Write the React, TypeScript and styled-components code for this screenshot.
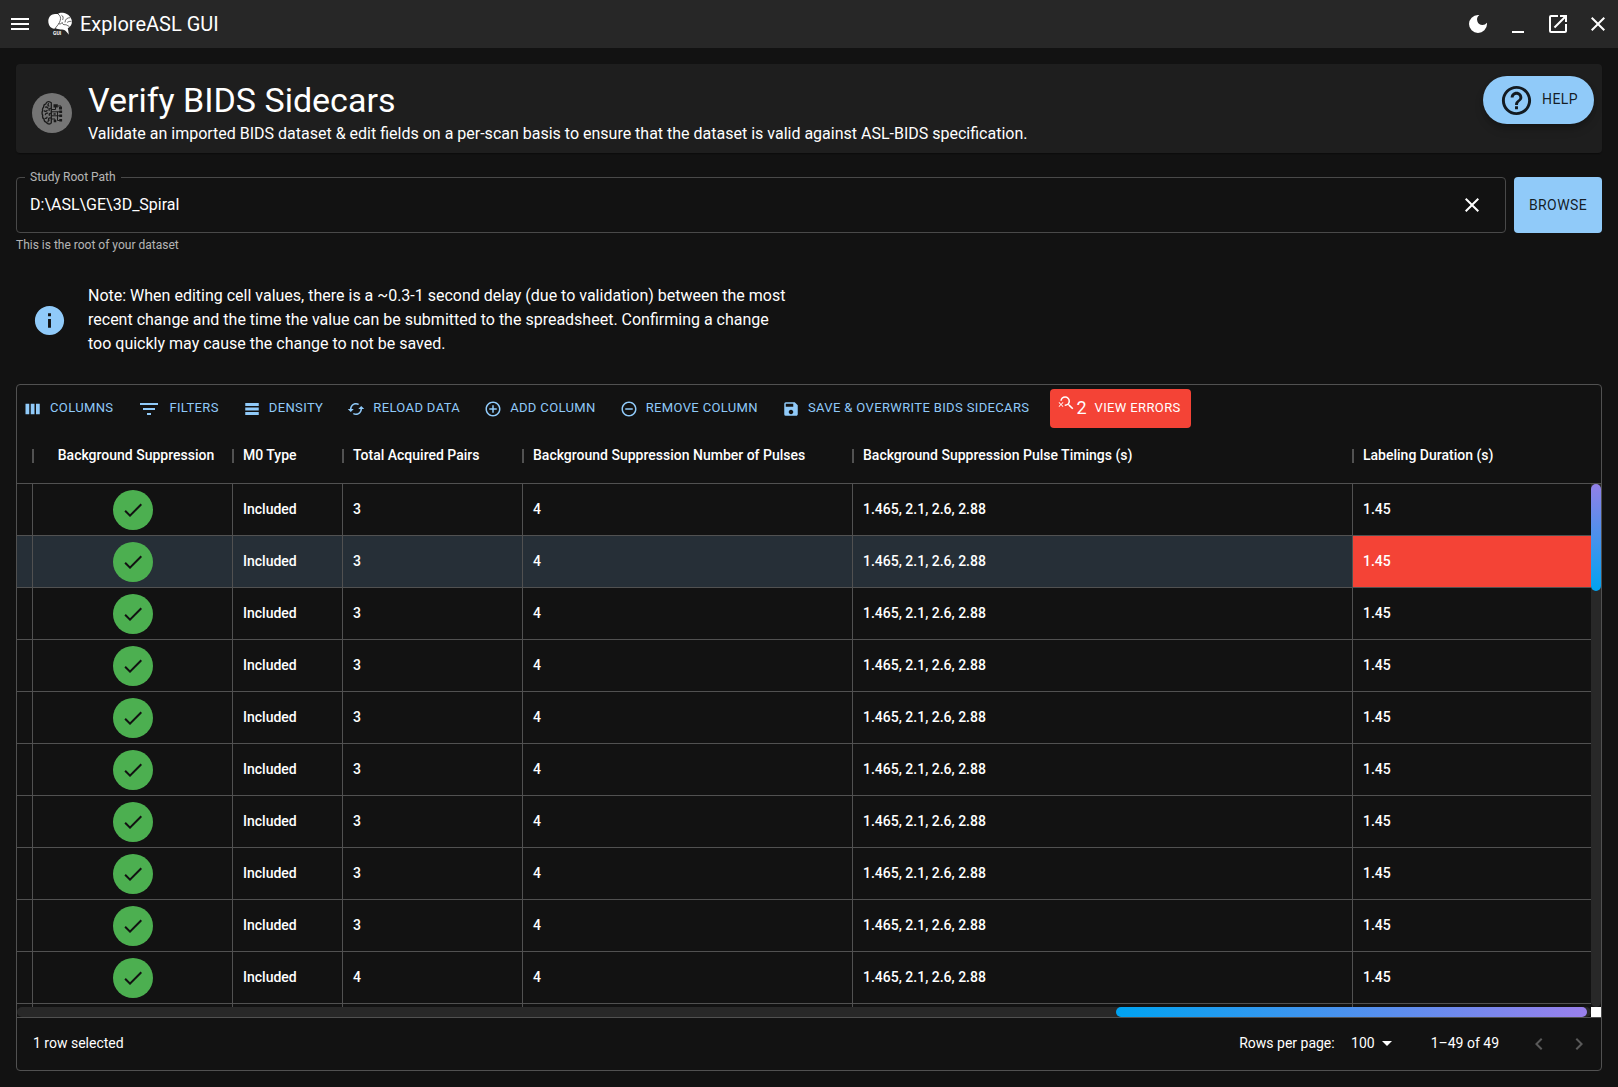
import React, { useState } from "react";
import styled, { createGlobalStyle, css } from "styled-components";
import {
  MdMenu,
  MdDarkMode,
  MdMinimize,
  MdOpenInNew,
  MdClose,
  MdHelpOutline,
  MdInfo,
  MdFilterList,
  MdCached,
  MdAddCircleOutline,
  MdRemoveCircleOutline,
  MdSave,
  MdSearchOff,
  MdCheck,
  MdArrowDropDown,
  MdKeyboardArrowLeft,
  MdKeyboardArrowRight,
} from "react-icons/md";

const color = {
  page: "#121212",
  paper: "#1e1e1e",
  bar: "#272727",
  line: "#515151",
  primary: "#90caf9",
  error: "#f44336",
  success: "#4caf50",
  selected: "#262f37",
  muted: "rgba(255, 255, 255, 0.7)",
  disabled: "rgba(255, 255, 255, 0.3)",
  ink: "rgba(0, 0, 0, 0.87)",
};

const GlobalStyle = createGlobalStyle`
  *, *::before, *::after { box-sizing: border-box; }
  body {
    margin: 0;
    background: ${color.page};
    color: #fff;
    font-family: Roboto, "Liberation Sans", sans-serif;
    font-size: 16px;
    line-height: 24px;
  }
  button, input, select { font: inherit; color: inherit; }
  svg { display: block; flex: none; }
`;

const Shell = styled.div`
  display: flex;
  flex-direction: column;
  height: 100vh;
`;

const AppBar = styled.header`
  display: flex;
  align-items: center;
  height: 48px;
  flex: none;
  background: ${color.bar};
`;

const IconButton = styled.button`
  display: flex;
  padding: 8px;
  border: 0;
  border-radius: 50%;
  background: none;
  font-size: 24px;
  cursor: pointer;

  &:disabled {
    color: ${color.disabled};
    cursor: default;
  }
`;

const Brand = styled.div`
  display: flex;
  align-items: center;
  gap: 8px;
  flex: 1;
  padding-left: 8px;
  font-size: 20px;
`;

const Main = styled.main`
  display: flex;
  flex-direction: column;
  flex: 1;
  min-height: 0;
  padding: 16px;
`;

const TitleCard = styled.section`
  display: flex;
  align-items: center;
  gap: 16px;
  padding: 16px 8px 7px 16px;
  border-radius: 4px;
  background: ${color.paper};
  box-shadow: 0 2px 1px -1px rgba(0, 0, 0, 0.2), 0 1px 1px rgba(0, 0, 0, 0.14);
`;

const Avatar = styled.span<{ $tone: string }>`
  display: flex;
  align-items: center;
  justify-content: center;
  flex: none;
  width: 40px;
  height: 40px;
  border-radius: 50%;
  background: ${(p) => p.$tone};
  color: ${color.page};
  font-size: 24px;
`;

const TitleText = styled.div`
  flex: 1;
`;

const Title = styled.h1`
  margin: 0 0 2px;
  font-size: 34px;
  font-weight: 400;
  line-height: 40px;
`;

const Subtitle = styled.p`
  margin: 0;
`;

const buttonText = css`
  padding-bottom: 2px;
  letter-spacing: 0.028em;
  text-transform: uppercase;
`;

const HelpButton = styled.button`
  display: flex;
  align-items: center;
  align-self: flex-start;
  gap: 8px;
  height: 48px;
  margin-top: -4px;
  padding: 0 16px;
  border: 0;
  border-radius: 24px;
  background: ${color.primary};
  color: ${color.ink};
  font-size: 14px;
  box-shadow: 0 3px 5px -1px rgba(0, 0, 0, 0.2), 0 6px 10px rgba(0, 0, 0, 0.14);
  cursor: pointer;
`;

const ButtonLabel = styled.span`
  ${buttonText}
`;

const PathRow = styled.div`
  display: flex;
  gap: 8px;
  margin-top: 24px;
`;

const PathField = styled.div`
  position: relative;
  display: flex;
  align-items: center;
  flex: 1;
  height: 56px;
  padding: 0 13px;
  border: 1px solid #494949;
  border-radius: 4px;
`;

const PathLabel = styled.label`
  position: absolute;
  top: -11px;
  left: 8px;
  padding: 0 5px;
  background: ${color.page};
  color: ${color.muted};
  font-size: 12px;
  line-height: 20px;
`;

const PathInput = styled.input`
  flex: 1;
  min-width: 0;
  padding: 0;
  border: 0;
  outline: 0;
  background: none;
`;

const BrowseButton = styled.button`
  padding: 0 15px;
  border: 0;
  border-radius: 4px;
  background: ${color.primary};
  color: ${color.ink};
  font-size: 14px;
  cursor: pointer;
`;

const HelperText = styled.p`
  margin: 2px 0 0;
  color: ${color.muted};
  font-size: 12px;
  line-height: 20px;
`;

const Note = styled.section`
  display: flex;
  align-items: center;
  gap: 21px;
  padding: 29px 16px 28px;

  svg {
    color: ${color.primary};
  }
`;

const NoteText = styled.p`
  margin: 0;
  max-width: 704px;
`;

const GridPanel = styled.section`
  display: flex;
  flex-direction: column;
  flex: 1;
  min-height: 0;
  border: 1px solid ${color.line};
  border-radius: 4px;
`;

const Toolbar = styled.div`
  display: flex;
  align-items: center;
  gap: 16px;
  padding: 4px 4px 0;
`;

const ToolButton = styled.button`
  display: flex;
  align-items: center;
  gap: 8px;
  padding: 4px 5px 4px 3px;
  border: 0;
  border-radius: 4px;
  background: none;
  color: ${color.primary};
  font-size: 13px;
  white-space: nowrap;
  cursor: pointer;
`;

const ErrorButton = styled(ToolButton)`
  height: 39px;
  padding: 0 10px 0 8px;
  background: ${color.error};
  color: #fff;
`;

const ErrorCount = styled.span`
  display: flex;
  padding-bottom: 2px;
  font-size: 18px;

  svg {
    margin-top: -2px;
  }
`;

const Viewport = styled.div`
  display: grid;
  grid-template-columns: minmax(0, 1fr) 10px;
  grid-template-rows: minmax(0, 1fr) 10px;
  flex: 1;
  min-height: 0;
`;

const TableClip = styled.div`
  overflow: hidden;
`;

const Table = styled.table`
  width: 100%;
  table-layout: fixed;
  border-spacing: 0;
  font-size: 14px;
  font-weight: 500;
`;

const HeadCell = styled.th<{ $center?: boolean }>`
  position: relative;
  height: 56px;
  padding: ${(p) => (p.$center ? "0 4px 2px 10px" : "0 10px 2px")};
  border-bottom: 1px solid ${color.line};
  font-weight: 500;
  text-align: ${(p) => (p.$center ? "center" : "left")};
  white-space: nowrap;

  &:not(:last-child)::after {
    content: "";
    position: absolute;
    top: 21px;
    right: -1px;
    width: 2px;
    height: 14px;
    background: ${color.line};
  }
`;

const Row = styled.tr<{ $selected?: boolean }>`
  background: ${(p) => (p.$selected ? color.selected : "none")};
`;

const Cell = styled.td<{ $invalid?: boolean }>`
  height: 52px;
  padding: 0 10px 2px;
  border-bottom: 1px solid ${color.line};
  background: ${(p) => (p.$invalid ? color.error : "none")};

  &:not(:last-child) {
    border-right: 1px solid ${color.line};
  }
`;

const CheckCell = styled(Cell)`
  padding: 0;

  ${Avatar} {
    margin: 0 auto;
  }
`;

const TrackColumn = styled.div`
  display: flex;
  flex-direction: column;
`;

const TrackHead = styled.div`
  flex: none;
  height: 56px;
  border-bottom: 1px solid ${color.line};
`;

const VerticalTrack = styled.div`
  flex: 1;
  border-radius: 0 0 5px 5px;
  background: #282828;
`;

const VerticalThumb = styled.div`
  height: 107px;
  border-radius: 5px;
  background: linear-gradient(to top, #00a3f1, #9280e8);
`;

const HorizontalTrack = styled.div`
  display: flex;
  justify-content: flex-end;
  padding-right: 4px;
  border-radius: 5px;
  background: #282828;
`;

const HorizontalThumb = styled.div`
  width: 30%;
  border-radius: 5px;
  background: linear-gradient(to right, #00a3f1, #9a80ec);
`;

const TrackCorner = styled.div`
  background: #fff;
`;

const Footer = styled.footer`
  display: flex;
  align-items: center;
  justify-content: space-between;
  height: 53px;
  padding: 0 2px 0 16px;
  border-top: 1px solid ${color.line};
  font-size: 14px;
`;

const FooterText = styled.span`
  padding-bottom: 2px;
`;

const Pager = styled.div`
  display: flex;
  align-items: center;
`;

const PageSize = styled.div`
  position: relative;
  margin: 0 32px 0 8px;

  svg {
    position: absolute;
    top: 0;
    right: 0;
    pointer-events: none;
  }
`;

const PageSizeSelect = styled.select`
  display: block;
  padding: 0 24px 2px 8px;
  border: 0;
  outline: 0;
  background: none;
  appearance: none;
  text-align: right;
`;

const PagerButtons = styled.div`
  display: flex;
  margin-left: 20px;
`;

const BrandLogo = () => (
  <svg width="24" height="24" viewBox="0 0 24 24" aria-hidden="true">
    <path
      fill="#fff"
      d="M7 2C3.500 2 .6 4.800.3 8.500c-.2 3 1 6.500 4 7.800 1.400.6 2.400.5 3.300-.3 1.500 1.300 4 1.600 6.400 1.400 1 .2 2 .3 2.800.8 1.700 1.200 2.900 3 4 4.600-.2-2.300-.5-4.300-1-6.600 2.600-1.100 4.200-3.600 4.100-6.700C23.700 5.500 20.500 2 16.200 1 13.800.5 11.600.6 9.800 2 9 1.900 8 1.900 7 2z"
    />
    <path
      fill="none"
      stroke={color.bar}
      strokeWidth="0.7"
      strokeLinecap="round"
      strokeLinejoin="round"
      d="M10.200 2.200c2.200 1.200 2.900 3.700 2 6.400-.8 2.700-2.300 4.300-4.600 7.200M11 11.800c1.600.6 2.400-.2 3.200-1.300.2 1.700 1.300 2.400 3 2.200 1.600-.1 2.400 1.300 3.800 1.600M13.800 3.400c1.600.6 1.600 2.500 1 4.200M17 10c.3-3 2.300-4.400 5-4.300M19.500 10.200c1.100-.8 2.300-1 3.500-.8"
    />
    <text x="5" y="22.700" fill="#fff" fontSize="5" fontWeight="700">
      GUI
    </text>
  </svg>
);

const CircuitBrain = () => (
  <svg width="24" height="24" viewBox="0 0 24 24" aria-hidden="true">
    <path
      fill="#757575"
      stroke="#1b1b1b"
      strokeWidth="1.300"
      strokeLinejoin="round"
      d="M9.500.8C7.700.3 6.300 1.200 5.900 2.800 4.200 3.200 3.500 4.600 3.700 6 2.600 7 2.200 8.300 2.700 9.600c-.8 1.500-.8 3.300.1 4.700-.5 1.500 0 3 1.200 3.800 0 1.700 1 3 2.500 3.300.8 1.500 2.700 2.100 4.200 1.100l.6-.8V1.800z"
    />
    <path
      fill="none"
      stroke="#1b1b1b"
      strokeWidth="1.300"
      strokeLinecap="round"
      d="M8.500 2.800c-.9.800-.6 1.900.4 2.200M5.600 6.200c1.100-.4 2 0 2.400 1M10.300 7.300c-1.200.3-1.500 1.200-1.200 2.100M4.400 9.900c.9.600 2 .4 2.700-.4M5.400 13.500c.2-1.100 1.200-1.600 2.200-1.300M10.400 12.400c-1 .2-1.400 1-1.100 1.900M5.200 17.300c.9.200 1.700-.2 1.800-1.100M10.300 17c-1.200-.2-1.900.5-1.800 1.500M8 20.700c-.1-.9.400-1.400 1.200-1.500"
    />
    <g fill="none" stroke="#1b1b1b" strokeWidth="1">
      <path d="M11.500 8.500h4V5M11.500 10.800h9M11.500 14.800h9M11.500 18h3.500v2M18 5h3v2M17.500 10.800v8.700h3" />
    </g>
    <path
      fill="#1b1b1b"
      d="M13.500 3.200h4.300v3.300h-4.300zM19 6h3v2.500h-3zM19.300 9.600h2.800v2.500h-2.800zM19.300 13.500h2.800v2.500h-2.800zM19.300 18h2.800v2.600h-2.800zM13.500 12.200h2.200v1.600h-2.200zM13.700 19h2.600v2.200h-2.600z"
    />
  </svg>
);

const ColumnsIcon = () => (
  <svg width="18" height="18" viewBox="0 0 24 24" fill="currentColor" aria-hidden="true">
    <path d="M2 5h5v14H2zM9 5h5v14H9zM16 5h5v14h-5z" />
  </svg>
);

const RowsIcon = () => (
  <svg width="18" height="18" viewBox="0 0 24 24" fill="currentColor" aria-hidden="true">
    <path d="M3 4h18v4H3zM3 10h18v4H3zM3 16h18v4H3z" />
  </svg>
);

const tools = [
  { label: "Columns", icon: <ColumnsIcon /> },
  { label: "Filters", icon: <MdFilterList size={24} /> },
  { label: "Density", icon: <RowsIcon /> },
  { label: "Reload Data", icon: <MdCached size={18} /> },
  { label: "Add Column", icon: <MdAddCircleOutline size={18} /> },
  { label: "Remove Column", icon: <MdRemoveCircleOutline size={18} /> },
  { label: "Save & Overwrite BIDS Sidecars", icon: <MdSave size={18} /> },
];

const columns = [
  { label: "", width: 16 },
  { label: "Background Suppression", width: 200, center: true },
  { label: "M0 Type", width: 110 },
  { label: "Total Acquired Pairs", width: 180 },
  { label: "Background Suppression Number of Pulses", width: 330 },
  { label: "Background Suppression Pulse Timings (s)", width: 500 },
  { label: "Labeling Duration (s)" },
];

const rows = [3, 3, 3, 3, 3, 3, 3, 3, 3, 4].map((pairs, index) => ({
  id: index,
  m0Type: "Included",
  pairs,
  pulses: 4,
  timings: "1.465, 2.1, 2.6, 2.88",
  duration: "1.45",
  selected: index === 1,
  invalid: index === 1,
}));

export default function App() {
  const [path, setPath] = useState("D:\\ASL\\GE\\3D_Spiral");

  return (
    <Shell>
      <GlobalStyle />
      <AppBar>
        <IconButton aria-label="Menu"><MdMenu /></IconButton>
        <Brand>
          <BrandLogo />
          <span>ExploreASL GUI</span>
        </Brand>
        <IconButton aria-label="Dark mode"><MdDarkMode /></IconButton>
        <IconButton aria-label="Minimize"><MdMinimize /></IconButton>
        <IconButton aria-label="Resize"><MdOpenInNew /></IconButton>
        <IconButton aria-label="Close"><MdClose /></IconButton>
      </AppBar>

      <Main>
        <TitleCard>
          <Avatar $tone="#757575"><CircuitBrain /></Avatar>
          <TitleText>
            <Title>Verify BIDS Sidecars</Title>
            <Subtitle>
              Validate an imported BIDS dataset &amp; edit fields on a per-scan basis to ensure
              that the dataset is valid against ASL-BIDS specification.
            </Subtitle>
          </TitleText>
          <HelpButton>
            <MdHelpOutline size={35} />
            <ButtonLabel>Help</ButtonLabel>
          </HelpButton>
        </TitleCard>

        <PathRow>
          <PathField>
            <PathLabel htmlFor="study-root">Study Root Path</PathLabel>
            <PathInput
              id="study-root"
              value={path}
              onChange={(event) => setPath(event.target.value)}
            />
            <IconButton aria-label="Clear path" onClick={() => setPath("")}>
              <MdClose />
            </IconButton>
          </PathField>
          <BrowseButton>
            <ButtonLabel>Browse</ButtonLabel>
          </BrowseButton>
        </PathRow>
        <HelperText>This is the root of your dataset</HelperText>

        <Note>
          <MdInfo size={35} />
          <NoteText>
            Note: When editing cell values, there is a ~0.3-1 second delay (due to validation)
            between the most recent change and the time the value can be submitted to the
            spreadsheet. Confirming a change too quickly may cause the change to not be saved.
          </NoteText>
        </Note>

        <GridPanel>
          <Toolbar>
            {tools.map((tool) => (
              <ToolButton key={tool.label}>
                {tool.icon}
                <ButtonLabel>{tool.label}</ButtonLabel>
              </ToolButton>
            ))}
            <ErrorButton>
              <ErrorCount>
                <MdSearchOff size={18} />2
              </ErrorCount>
              <ButtonLabel>View Errors</ButtonLabel>
            </ErrorButton>
          </Toolbar>

          <Viewport>
            <TableClip>
              <Table>
                <colgroup>
                  {columns.map((column) => (
                    <col key={column.label} width={column.width} />
                  ))}
                </colgroup>
                <thead>
                  <tr>
                    {columns.map((column) => (
                      <HeadCell key={column.label} $center={column.center}>
                        {column.label}
                      </HeadCell>
                    ))}
                  </tr>
                </thead>
                <tbody>
                  {rows.map((row) => (
                    <Row key={row.id} $selected={row.selected}>
                      <Cell />
                      <CheckCell>
                        <Avatar $tone={color.success}><MdCheck /></Avatar>
                      </CheckCell>
                      <Cell>{row.m0Type}</Cell>
                      <Cell>{row.pairs}</Cell>
                      <Cell>{row.pulses}</Cell>
                      <Cell>{row.timings}</Cell>
                      <Cell $invalid={row.invalid}>{row.duration}</Cell>
                    </Row>
                  ))}
                  <Row aria-hidden="true">
                    {columns.map((column) => (
                      <Cell key={column.label} />
                    ))}
                  </Row>
                </tbody>
              </Table>
            </TableClip>
            <TrackColumn>
              <TrackHead />
              <VerticalTrack>
                <VerticalThumb />
              </VerticalTrack>
            </TrackColumn>
            <HorizontalTrack>
              <HorizontalThumb />
            </HorizontalTrack>
            <TrackCorner />
          </Viewport>

          <Footer>
            <FooterText>1 row selected</FooterText>
            <Pager>
              <FooterText as="label" htmlFor="page-size">Rows per page:</FooterText>
              <PageSize>
                <PageSizeSelect id="page-size" defaultValue="100">
                  <option>25</option>
                  <option>50</option>
                  <option>100</option>
                </PageSizeSelect>
                <MdArrowDropDown size={24} />
              </PageSize>
              <FooterText>1–49 of 49</FooterText>
              <PagerButtons>
                <IconButton aria-label="Previous page" disabled><MdKeyboardArrowLeft /></IconButton>
                <IconButton aria-label="Next page" disabled><MdKeyboardArrowRight /></IconButton>
              </PagerButtons>
            </Pager>
          </Footer>
        </GridPanel>
      </Main>
    </Shell>
  );
}
